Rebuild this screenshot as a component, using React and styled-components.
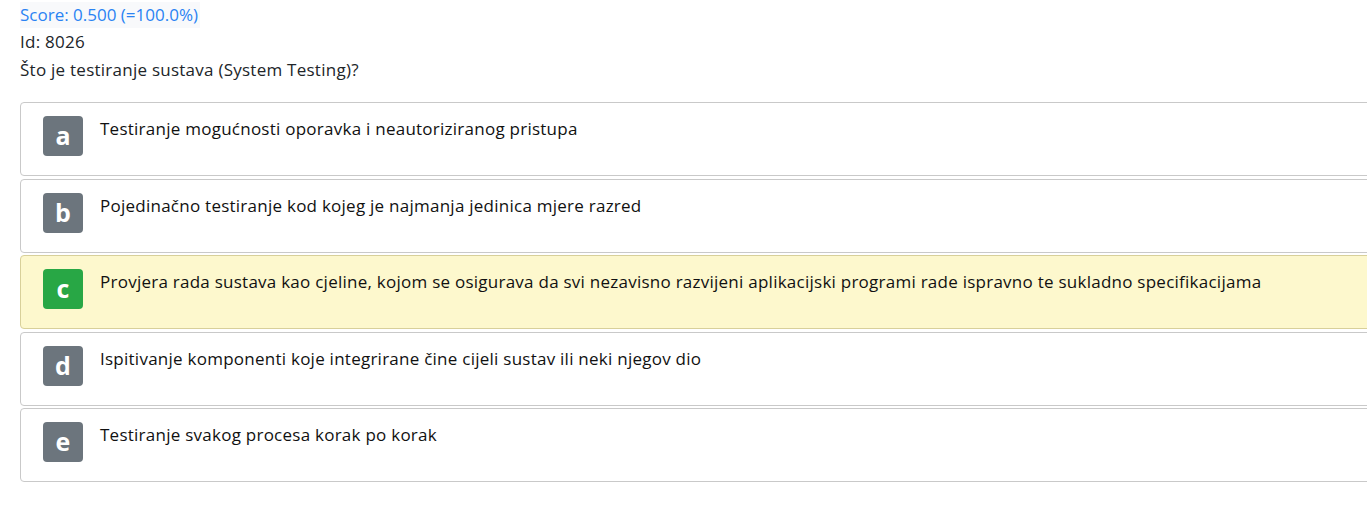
import React from 'react'
import styled, { createGlobalStyle } from 'styled-components'

const GlobalStyle = createGlobalStyle`
  html, body {
    margin: 0;
    padding: 0;
    background: #fff;
    overflow: hidden;
  }
  body {
    font-family: "Open Sans", "Noto Sans", sans-serif;
    color: #212529;
  }
`;

const Page = styled.div`
  padding: 2px 0 0 20px;
  width: 1400px;
`;

const Score = styled.div`
  display: inline-block;
  color: #2a83f3;
  background: #f8f9fb;
  font-size: 17px;
  line-height: 26px;
  padding-right: 2px;
`;

const InfoLine = styled.div`
  font-size: 17px;
  letter-spacing: 0.25px;
  line-height: 28px;
  color: #212529;
`;

const AnswerList = styled.div`
  display: flex;
  flex-direction: column;
  gap: 2.5px;
  margin-top: 18px;
`;

const Answer = styled.div`
  display: flex;
  align-items: flex-start;
  gap: 17px;
  height: 74px;
  box-sizing: border-box;
  padding: 13px 0 0 22px;
  border: 1px solid ${({ correct }) => (correct ? '#d8d09a' : '#c9c9c9')};
  border-radius: 4px;
  background: ${({ correct }) => (correct ? '#fdf8cd' : '#fff')};
`;

const Badge = styled.div`
  width: 40px;
  height: 40px;
  flex: none;
  border-radius: 4px;
  background: ${({ correct }) => (correct ? '#28a745' : '#6c757d')};
  color: #fff;
  font-weight: 700;
  font-size: 25px;
  line-height: 38px;
  text-align: center;
`;

const AnswerText = styled.div`
  font-size: 17px;
  letter-spacing: 0.25px;
  line-height: 24px;
  padding-top: 1px;
  color: #111;
`;

const answers = [
  { key: 'a', text: 'Testiranje mogućnosti oporavka i neautoriziranog pristupa' },
  { key: 'b', text: 'Pojedinačno testiranje kod kojeg je najmanja jedinica mjere razred' },
  {
    key: 'c',
    text: 'Provjera rada sustava kao cjeline, kojom se osigurava da svi nezavisno razvijeni aplikacijski programi rade ispravno te sukladno specifikacijama',
    correct: true,
  },
  { key: 'd', text: 'Ispitivanje komponenti koje integrirane čine cijeli sustav ili neki njegov dio' },
  { key: 'e', text: 'Testiranje svakog procesa korak po korak' },
]

export default function App() {
  return (
    <>
      <GlobalStyle />
      <Page>
        <Score>Score: 0.500 (=100.0%)</Score>
        <InfoLine>Id: 8026</InfoLine>
        <InfoLine>Što je testiranje sustava (System Testing)?</InfoLine>
        <AnswerList>
          {answers.map((a) => (
            <Answer key={a.key} correct={a.correct}>
              <Badge correct={a.correct}>{a.key}</Badge>
              <AnswerText>{a.text}</AnswerText>
            </Answer>
          ))}
        </AnswerList>
      </Page>
    </>
  )
}
